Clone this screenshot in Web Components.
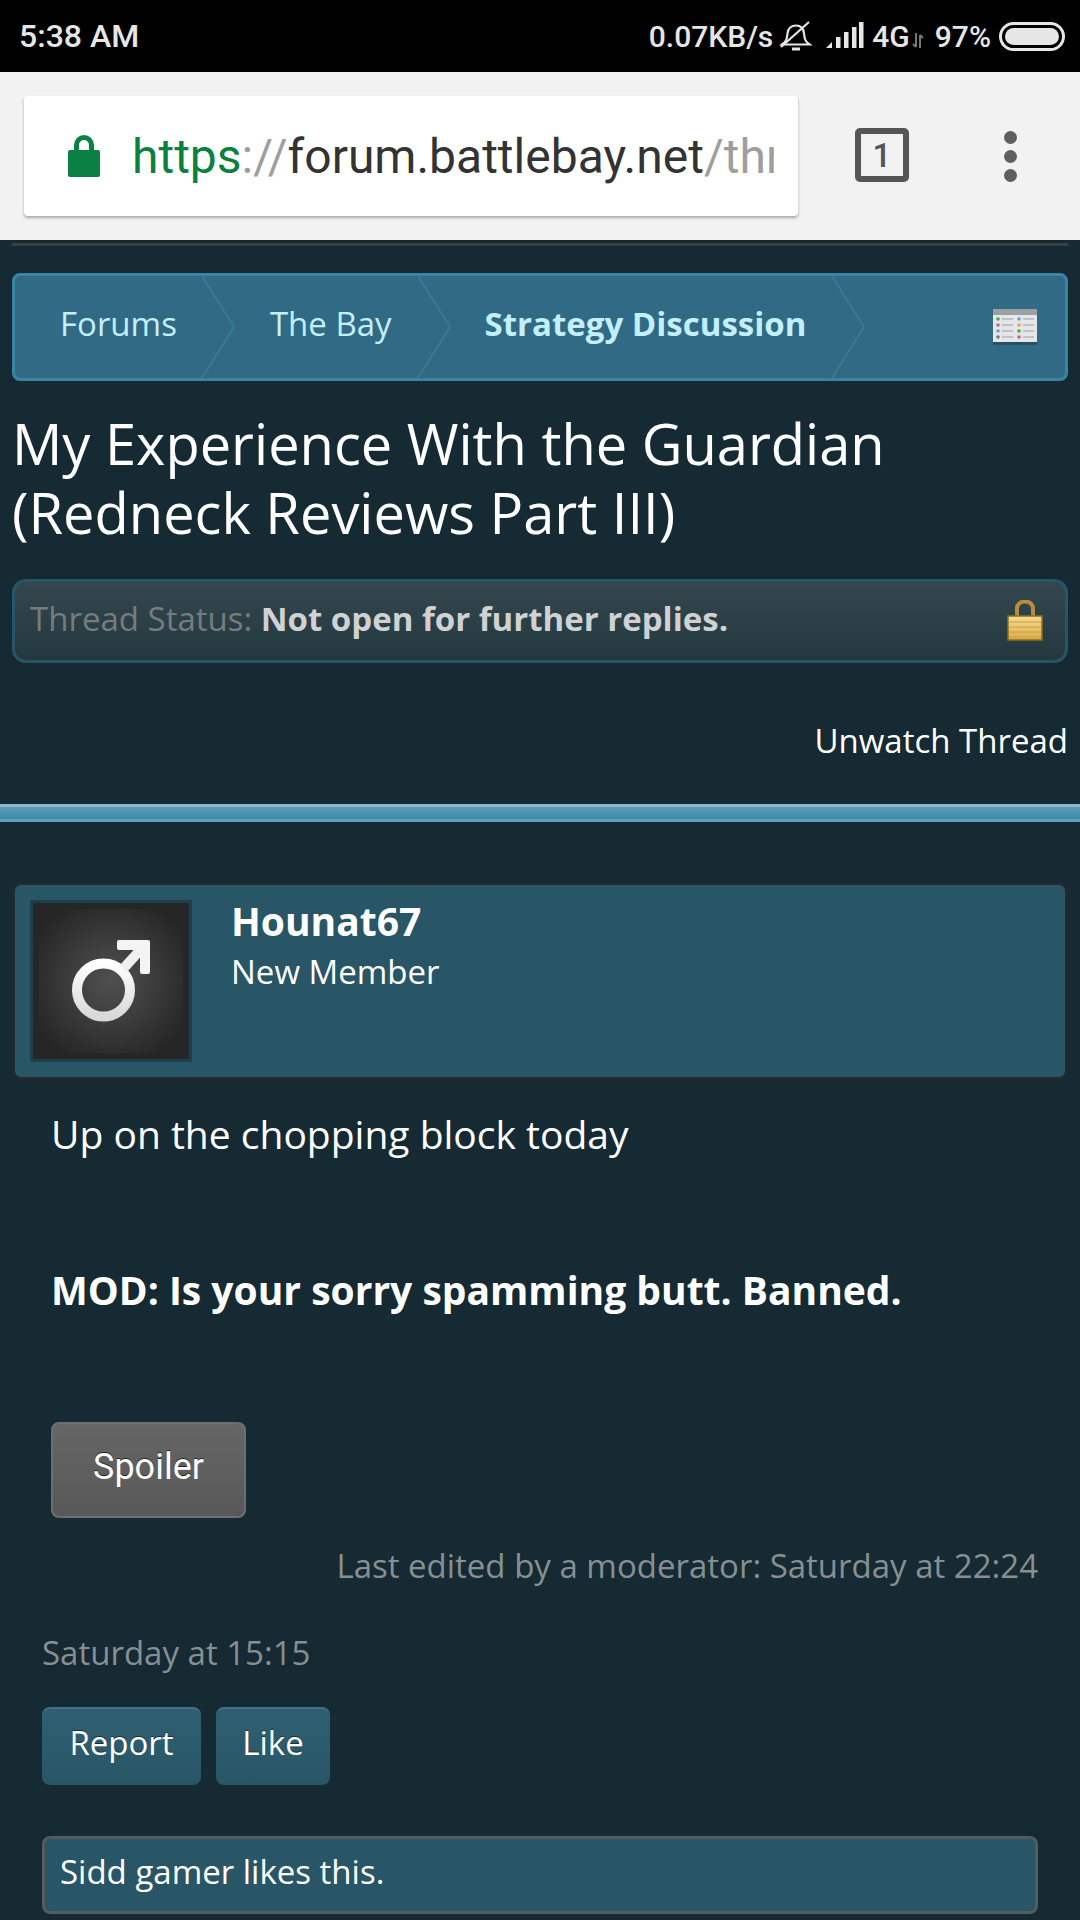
<!DOCTYPE html>
<html><head><meta charset="utf-8"><style>
html,body{margin:0;padding:0;background:#152a33;}
body{width:1080px;height:1920px;overflow:hidden;font-family:"Open Sans",sans-serif;color:#fff;}
</style></head><body>
<status-bar></status-bar>
<browser-toolbar></browser-toolbar>
<forum-page>
  <forum-breadcrumb>
    <span>Forums</span><span>The Bay</span><span class="cur">Strategy Discussion</span>
  </forum-breadcrumb>
  <thread-title>My Experience With the Guardian<br>(Redneck Reviews Part III)</thread-title>
  <thread-status></thread-status>
  <thread-links>Unwatch Thread</thread-links>
  <section-bar></section-bar>
  <post-header name="Hounat67" role="New Member"></post-header>
  <post-body>
    <div>Up on the chopping block today</div>
    <div class="mod">MOD: Is your sorry spamming butt. Banned.</div>
  </post-body>
  <spoiler-button>Spoiler</spoiler-button>
  <post-edited>Last edited by a moderator: Saturday at 22:24</post-edited>
  <post-date>Saturday at 15:15</post-date>
  <post-actions></post-actions>
  <likes-box>Sidd gamer likes this.</likes-box>
</forum-page>
<script>
function def(name, html, after){
  customElements.define(name, class extends HTMLElement{
    constructor(){super();this.attachShadow({mode:'open'}).innerHTML=html;}
    connectedCallback(){ if(after) after(this); }
  });
}
def('status-bar',`<style>
:host{display:flex;height:72px;background:#000;color:#e6e6e6;align-items:center;justify-content:space-between;font:500 30px Roboto,sans-serif;padding:0 15px 0 19px;box-sizing:border-box}
.r{display:flex;align-items:center}
svg{display:block}
.time{font-size:32px}
</style><span class="time">5:38 AM</span><div class="r"><span>0.07KB/s</span>
<svg width="34" height="32" viewBox="0 0 34 32" style="margin-left:6px"><g fill="none" stroke="#e6e6e6" stroke-width="2.2"><path d="M3 24.500c4-3 5-5 5.500-11 .5-5 4-8 8.500-8s7.500 3 8 8c.5 6 1.500 8 5.500 11z"/><path d="M2 27 L30 2"/><path d="M13 29h8" stroke-width="3"/></g></svg>
<svg width="38" height="28" viewBox="0 0 38 28" style="margin-left:13px"><g fill="#e6e6e6"><path d="M0 26 L6 20 V26Z"/><rect x="10" y="15" width="4.500" height="11"/><rect x="18" y="10" width="4.500" height="16"/><rect x="26" y="5" width="4.500" height="21"/><rect x="33" y="0" width="4.500" height="26"/></g></svg>
<span style="margin-left:8px">4G</span>
<svg width="12" height="16" viewBox="0 0 12 16" style="margin:10px 0 0 2px"><g stroke="#777" stroke-width="2" fill="none"><path d="M4 0V14M1 11l3 3M8 15V2M8 2l3 3"/></g></svg>
<span style="margin-left:11px">97%</span>
<svg width="66" height="29" viewBox="0 0 66 29" style="margin-left:8px"><rect x="1.500" y="1.500" width="63" height="26" rx="13" fill="none" stroke="#e6e6e6" stroke-width="3"/><rect x="6" y="6" width="54" height="17" rx="8.500" fill="#e6e6e6"/></svg>
</div>`);
def('browser-toolbar',`<style>
:host{display:flex;height:168px;background:#f2f2f2;align-items:flex-start;padding:24px 0 0 24px;box-sizing:border-box}
.box{width:774px;height:120px;background:#fff;border-radius:4px;box-shadow:0 2px 3px rgba(0,0,0,.3);display:flex;align-items:center;padding:0 24px 0 44px;box-sizing:border-box;font:48px Roboto,sans-serif;white-space:nowrap;overflow:hidden}
.t{overflow:hidden;margin-left:32px;flex:1}
.g{color:#0b8043}.l{color:#9e9e9e}.d{color:#333}
.tab{margin:32px 0 0 57px;width:54px;height:54px;border:6px solid #555;border-radius:5px;box-sizing:border-box;font:500 33px Roboto,sans-serif;color:#555;display:flex;align-items:center;justify-content:center;background:transparent}
.menu{margin:35px 0 0 95px;display:flex;flex-direction:column;gap:6px}
.menu i{display:block;width:13px;height:13px;border-radius:50%;background:#5f5f5f}
</style><div class="box"><svg width="32" height="42" viewBox="0 0 32 42"><path fill="#0b8043" d="M2 15h4V10a10 10 0 0 1 20 0v5h4a2 2 0 0 1 2 2v23a2 2 0 0 1-2 2H2a2 2 0 0 1-2-2V17a2 2 0 0 1 2-2zM11 15h10V10a5 5 0 0 0-10 0z"/></svg><div class="t"><span class="g">https</span><span class="l">://</span><span class="d">forum.battlebay.net</span><span class="l">/thr</span></div></div>
<div class="tab">1</div><div class="menu"><i></i><i></i><i></i></div>`);
def('forum-page',`<style>
:host{display:block;position:relative}
.rule{height:3px;background:#3c3f40;margin:3px 12px 27px}
</style><div class="rule"></div><slot></slot>`);
def('forum-breadcrumb',`<style>
:host{display:flex;align-items:center;position:relative;height:108px;margin:0 12px;box-sizing:border-box;background:#316a85;border:3px solid #3b83a4;border-radius:8px;font-size:33px;color:#c4effc;padding:0 0 7px 45px}
::slotted(span){display:block;white-space:nowrap}
.chev{position:absolute;top:0;left:0;width:100%;height:100%;pointer-events:none}
.grid{position:absolute;left:977px;top:32px;filter:blur(.5px)}
</style><slot></slot>
<svg class="chev" viewBox="0 0 1050 102" preserveAspectRatio="none"><g fill="none" stroke="#3b7d9b" stroke-width="1.500"><path d="M187 0 L219 51 L187 102"/><path d="M403 0 L435 51 L403 102"/><path d="M817 0 L849 51 L817 102"/></g></svg>
<svg class="grid" width="46" height="38" viewBox="0 0 46 38"><rect x="1" y="2" width="44" height="35" fill="#22404f" opacity=".6"/><rect x="1" y="1" width="44" height="33" fill="#e4e6e7"/><rect x="1" y="1" width="44" height="6" fill="#9aa0a3"/>
<g><circle cx="6" cy="11" r="1.800" fill="#4aa84a"/><circle cx="6" cy="17" r="1.800" fill="#c46a6a"/><circle cx="6" cy="23" r="1.800" fill="#6f9be0"/><circle cx="6" cy="29" r="1.800" fill="#777"/><circle cx="27" cy="11" r="1.800" fill="#6f9be0"/><circle cx="27" cy="17" r="1.800" fill="#e8a83a"/><circle cx="27" cy="23" r="1.800" fill="#4aa84a"/><circle cx="27" cy="29" r="1.800" fill="#c46a6a"/></g>
<g fill="#bfc3c5"><rect x="10" y="10" width="11" height="2"/><rect x="10" y="16" width="11" height="2"/><rect x="10" y="22" width="11" height="2"/><rect x="10" y="28" width="11" height="2"/><rect x="31" y="10" width="11" height="2"/><rect x="31" y="16" width="11" height="2"/><rect x="31" y="22" width="11" height="2"/><rect x="31" y="28" width="11" height="2"/></g></svg>`, el=>{
  const s=el.querySelectorAll('span');
  s[1].style.marginLeft='93px'; s[2].style.marginLeft='93px'; s[2].style.fontWeight='700';
});
def('thread-title',`<style>:host{display:block;margin:28px 12px 0;font-size:56px;line-height:69px;color:#fff}</style><slot></slot>`);
def('thread-status',`<style>
:host{display:flex;align-items:center;justify-content:space-between;height:84px;margin:32px 12px 0;box-sizing:border-box;border:3px solid #275669;border-radius:14px;background:linear-gradient(#34474f,#24383f);font-size:33px;padding:0 22px 6px 15px;color:#767c7e}
b{color:#cfd1d2}
svg{display:block;margin-top:5px;filter:blur(.6px)}
</style><span>Thread Status: <b>Not open for further replies.</b></span>
<svg width="36" height="42" viewBox="0 0 36 42"><defs><linearGradient id="g" x1="0" y1="0" x2="0" y2="1"><stop offset="0" stop-color="#f3dc92"/><stop offset=".5" stop-color="#ebc468"/><stop offset="1" stop-color="#d8aa48"/></linearGradient></defs><path d="M10 18V8a8 6.500 0 0 1 16 0v10" fill="none" stroke="#b48f3c" stroke-width="4"/><rect x="1" y="16" width="34" height="24" fill="url(#g)" stroke="#8f6c1c" stroke-width="1.500"/><g stroke="#c79f50" stroke-width="1.200"><path d="M2 22h32M2 27h32M2 32h32M2 37h32"/></g></svg>`);
def('thread-links',`<style>:host{display:block;text-align:right;margin:56px 12px 0;font-size:33px;line-height:44px;color:#fff}</style><slot></slot>`);
def('section-bar',`<style>:host{display:block;height:18px;margin-top:41px;background:linear-gradient(#8ab8ca 0,#8ab8ca 3px,#5c9db5 3px,#3d8aa7 15px,#5aa0ba 15px)}</style>`);
def('post-header',`<style>
:host{display:flex;height:192px;margin:63px 15px 0;box-sizing:border-box;background:#285666;border-radius:6px;box-shadow:0 0 0 2px #25292b;padding:15px;color:#fff}
.av{width:162px;height:162px;box-sizing:border-box;border:3px solid #1d404e;background:#262626;padding:6px;flex:none}
.in{width:100%;height:100%;background:radial-gradient(circle,#505050 0,#3d3d3d 40%,#262626 85%);display:flex;align-items:center;justify-content:center}
.info{margin-left:39px;margin-top:-3px}
.n{font-size:39px;font-weight:700;line-height:48px}
.r{font-size:33px;line-height:44px;margin-top:5px}
</style><div class="av"><div class="in"><svg width="96" height="96" viewBox="0 0 96 96"><defs><linearGradient id="m" x1="0" y1="0" x2="0" y2="1"><stop offset="0" stop-color="#fff"/><stop offset="1" stop-color="#d8d8d8"/></linearGradient></defs><circle cx="40.500" cy="57" r="26.500" fill="none" stroke="url(#m)" stroke-width="10"/><path d="M60 36 L80 14" stroke="#f0f0f0" stroke-width="10" fill="none"/><path d="M56 7h29a2 2 0 0 1 2 2v30a2 2 0 0 1-2 2h-6a2 2 0 0 1-2-2V17H56a2 2 0 0 1-2-2V9a2 2 0 0 1 2-2z" fill="#f4f4f4"/></svg></div></div>
<div class="info"><div class="n"></div><div class="r"></div></div>`, el=>{
  el.shadowRoot.querySelector('.n').textContent=el.getAttribute('name');
  el.shadowRoot.querySelector('.r').textContent=el.getAttribute('role');
});
def('post-body',`<style>
:host{display:flex;flex-direction:column;gap:112px;margin:35px 37px 0 51px;font-size:39px;line-height:44px;color:#fff}
::slotted(.mod){font-weight:700}
</style><slot></slot>`);
def('spoiler-button',`<style>
:host{display:flex;align-items:center;justify-content:center;width:195px;height:96px;margin:110px 0 0 51px;box-sizing:border-box;border:2px solid #6e6e6e;border-radius:8px;background:linear-gradient(#666,#585858);font:36px Roboto,sans-serif;color:#fff;text-shadow:0 -1px 0 #222;padding-bottom:6px}
</style><slot></slot>`);
def('post-edited',`<style>:host{display:block;text-align:right;margin:26px 42px 0;font-size:33px;line-height:44px;color:#878f92}</style><slot></slot>`);
def('post-date',`<style>:host{display:block;margin:43px 42px 0;font-size:33px;line-height:44px;color:#878f92}</style><slot></slot>`);
def('post-actions',`<style>
:host{display:flex;gap:15px;margin:32px 42px 0}
span{display:flex;align-items:center;justify-content:center;height:78px;box-sizing:border-box;background:linear-gradient(#2f5f72,#285666);border-top:2px solid #3f7085;border-radius:8px;font-size:33px;color:#fff;text-shadow:0 -1px 0 #15303a;padding-bottom:10px}
</style><span style="width:159px">Report</span><span style="width:114px">Like</span>`);
def('likes-box',`<style>:host{display:flex;align-items:center;height:78px;margin:51px 42px 0;box-sizing:border-box;border:3px solid #555a5c;border-radius:8px;background:#285666;padding:0 15px 8px;font-size:33px;color:#fff}</style><slot></slot>`);
</script></body></html>
